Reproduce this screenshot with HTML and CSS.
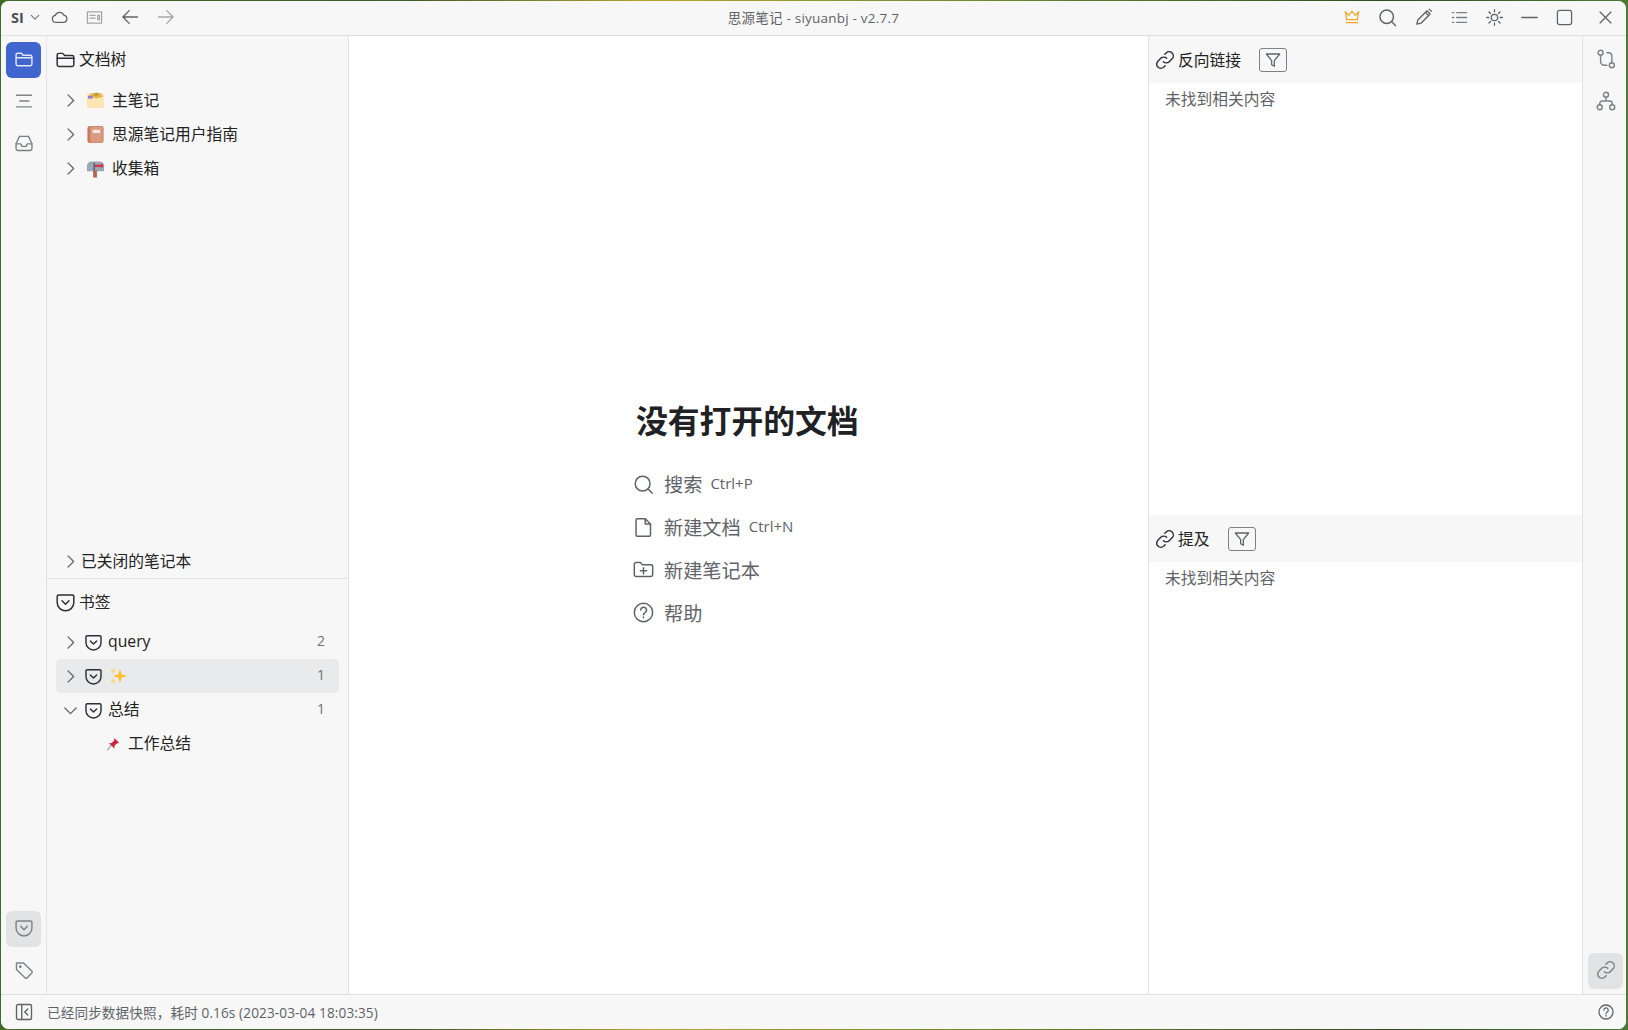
FILE: index.html
```html
<!DOCTYPE html>
<html lang="zh">
<head>
<meta charset="utf-8">
<title>思源笔记 - siyuanbj - v2.7.7</title>
<link rel="stylesheet" href="styles.css">
</head>
<body>
<svg class="sprite" aria-hidden="true">
  <symbol id="i-folder" viewBox="0 0 24 24"><path d="M2.5 7a2 2 0 0 1 2-2h4.300l2.200 2.500h8.500a2 2 0 0 1 2 2V18a2 2 0 0 1-2 2h-15a2 2 0 0 1-2-2z"/><path d="M2.500 10.500h19"/></symbol>
  <symbol id="i-pocket" viewBox="0 0 24 24"><path d="M4 3.500h16A1.500 1.500 0 0 1 21.500 5v7a9.500 9.500 0 0 1-19 0V5A1.500 1.500 0 0 1 4 3.500z"/><path d="M8 10l4 4 4-4"/></symbol>
  <symbol id="i-outline" viewBox="0 0 24 24"><path d="M3 5h18M7 12h11M3 19h18"/></symbol>
  <symbol id="i-inbox" viewBox="0 0 24 24"><path d="M2.500 13l3.500-8a2 2 0 0 1 1.800-1h8.400a2 2 0 0 1 1.800 1l3.500 8v6a2 2 0 0 1-2 2h-15a2 2 0 0 1-2-2z"/><path d="M2.500 13h5.500l1.500 3h5l1.500-3h5.500"/></symbol>
  <symbol id="i-tag" viewBox="0 0 24 24"><path d="M3 3.500h8.500L21.500 13.500a1.500 1.500 0 0 1 0 2l-6 6a1.500 1.500 0 0 1-2 0L3 11.500z" stroke-linejoin="round"/><circle cx="7.500" cy="8" r=".8"/></symbol>
  <symbol id="i-chev-r" viewBox="0 0 24 24"><path d="M8 3l9 9-9 9"/></symbol>
  <symbol id="i-chev-d" viewBox="0 0 24 24"><path d="M3 8l9 9 9-9"/></symbol>
  <symbol id="i-cloud" viewBox="0 0 24 24"><path d="M7 19a5 5 0 0 1-1-9.900A6.500 6.500 0 0 1 18 8.500 5.300 5.300 0 0 1 17.500 19z"/></symbol>
  <symbol id="i-doc" viewBox="0 0 24 24"><path d="M2 4h20v16H2z" stroke-opacity=".55"/><path d="M5.500 9h7.500M5.500 13h7.500M16.500 9h2.500v6h-2.500z" stroke-opacity=".55"/></symbol>
  <symbol id="i-back" viewBox="0 0 24 24"><path d="M22 12H3M11 3.500L2.500 12l8.500 8.500"/></symbol>
  <symbol id="i-fwd" viewBox="0 0 24 24"><path d="M2 12h19M13 3.500l8.500 8.500-8.500 8.500"/></symbol>
  <symbol id="i-crown" viewBox="0 0 24 24"><path d="M2 4l5 5.500L12 3.500l5 6L22 4l-2 12H4z"/><path d="M3.500 20.500h17"/></symbol>
  <symbol id="i-search" viewBox="0 0 24 24"><circle cx="11" cy="11" r="8.500"/><path d="M17.500 17.500L22 22"/></symbol>
  <symbol id="i-pen" viewBox="0 0 24 24"><path d="M2.500 21.500l1.300-5.500L16 3.800l4.200 4.200L8 20.200z"/><path d="M14 6l4 4M19 1.500l3 3"/></symbol>
  <symbol id="i-list" viewBox="0 0 24 24"><path d="M8 5h14M8 12h14M8 19h14M2 5h2M2 12h2M2 19h2"/></symbol>
  <symbol id="i-sun" viewBox="0 0 24 24"><circle cx="12" cy="12" r="4.500"/><path d="M12 1v3M12 20v3M1 12h3M20 12h3M4.200 4.200l2.100 2.100M17.700 17.700l2.100 2.100M4.200 19.800l2.100-2.100M17.700 6.300l2.100-2.100"/></symbol>
  <symbol id="i-min" viewBox="0 0 24 24"><path d="M1 12h22"/></symbol>
  <symbol id="i-max" viewBox="0 0 24 24"><rect x="2" y="2" width="20" height="20" rx="3"/></symbol>
  <symbol id="i-close" viewBox="0 0 24 24"><path d="M2 2l20 20M22 2L2 22"/></symbol>
  <symbol id="i-git" viewBox="0 0 24 24"><circle cx="5.500" cy="4.500" r="3"/><circle cx="19" cy="19.500" r="3"/><path d="M5.500 7.500V15a4.500 4.500 0 0 0 4.500 4.500h3M13 4.500h2a4 4 0 0 1 4 4v8"/></symbol>
  <symbol id="i-graph" viewBox="0 0 24 24"><circle cx="12" cy="4.500" r="3"/><circle cx="4.500" cy="19.500" r="3"/><circle cx="19.500" cy="19.500" r="3"/><path d="M12 7.500V12M4.500 16.500V15a3 3 0 0 1 3-3h9a3 3 0 0 1 3 3v1.500"/></symbol>
  <symbol id="i-link" viewBox="0 0 24 24"><path d="M10 14a5 5 0 0 0 7.100 0l3.400-3.400a5 5 0 0 0-7.100-7.100l-1.600 1.600"/><path d="M14 10a5 5 0 0 0-7.100 0l-3.400 3.400a5 5 0 0 0 7.100 7.100l1.600-1.600"/></symbol>
  <symbol id="i-filter" viewBox="0 0 24 24"><path d="M2 3h20l-8 10v8.500l-4-2.500v-6z"/></symbol>
  <symbol id="i-file" viewBox="0 0 24 24"><path d="M5 2h9l6 6v12.500a1.500 1.500 0 0 1-1.500 1.500h-13.500a1.500 1.500 0 0 1-1.500-1.500V3.500A1.500 1.500 0 0 1 5 2z"/><path d="M14 2v6h6"/></symbol>
  <symbol id="i-folder-plus" viewBox="0 0 24 24"><path d="M1.500 6a2 2 0 0 1 2-2h5l2.300 2.500h9.700a2 2 0 0 1 2 2V18a2 2 0 0 1-2 2h-17a2 2 0 0 1-2-2z"/><path d="M12 10v7M8.500 13.500h7"/></symbol>
  <symbol id="i-help" viewBox="0 0 24 24"><circle cx="12" cy="12" r="10.500"/><path d="M8.800 9.200a3.300 3.300 0 1 1 4.900 2.900c-1.100.6-1.700 1.200-1.700 2.400M12 17v1"/></symbol>
  <symbol id="i-dock" viewBox="0 0 24 24"><rect x="2" y="2" width="20" height="20" rx="2"/><path d="M9 2v20M17 8l-4 4 4 4"/></symbol>
</svg>

<div class="window">
  <header class="toolbar">
    <div class="tb-left">
      <span class="user">SI</span>
      <svg class="ic ic-10 tb-chev"><use href="#i-chev-d"/></svg>
      <svg class="ic ic-17 tb-cloud"><use href="#i-cloud"/></svg>
      <svg class="ic ic-15 tb-doc"><use href="#i-doc"/></svg>
      <svg class="ic ic-18 tb-back"><use href="#i-back"/></svg>
      <svg class="ic ic-18 tb-fwd"><use href="#i-fwd"/></svg>
    </div>
    <div class="tb-title">思源笔记 - siyuanbj - v2.7.7</div>
    <div class="tb-right">
      <svg class="ic ic-16 crown"><use href="#i-crown"/></svg>
      <svg class="ic ic-19"><use href="#i-search"/></svg>
      <svg class="ic ic-18"><use href="#i-pen"/></svg>
      <svg class="ic ic-17 soft"><use href="#i-list"/></svg>
      <svg class="ic ic-17"><use href="#i-sun"/></svg>
      <svg class="ic ic-17"><use href="#i-min"/></svg>
      <svg class="ic ic-17"><use href="#i-max"/></svg>
      <svg class="ic ic-12 close"><use href="#i-close"/></svg>
    </div>
  </header>

  <div class="body">
    <nav class="dock dock-left">
      <div class="dock-group">
        <span class="dock-btn is-primary"><svg class="ic ic-20"><use href="#i-folder"/></svg></span>
        <span class="dock-btn"><svg class="ic ic-20 soft"><use href="#i-outline"/></svg></span>
        <span class="dock-btn"><svg class="ic ic-20 soft"><use href="#i-inbox"/></svg></span>
      </div>
      <div class="dock-group">
        <span class="dock-btn is-on"><svg class="ic ic-20 soft"><use href="#i-pocket"/></svg></span>
        <span class="dock-btn"><svg class="ic ic-20 soft"><use href="#i-tag"/></svg></span>
      </div>
    </nav>

    <aside class="side">
      <section class="tree">
        <div class="side-head"><svg class="ic ic-21 dark"><use href="#i-folder"/></svg><span class="lift">文档树</span></div>
        <ul class="rows">
          <li class="row">
            <svg class="ic chev"><use href="#i-chev-r"/></svg>
            <svg class="emoji" viewBox="0 0 20 20"><rect x="1" y="2" width="18" height="16" rx="2" fill="#fde5b4"/><path d="M3 5l4-3h8l3 4-7 2z" fill="#e9b44a"/><rect x="2" y="5" width="5" height="3" fill="#9c7bd0"/><circle cx="11" cy="3.500" r="2" fill="#8bb34a"/><path d="M7 5l5-2 1 2z" fill="#e68a3a"/></svg>
            <span class="row-text lift">主笔记</span>
          </li>
          <li class="row">
            <svg class="ic chev"><use href="#i-chev-r"/></svg>
            <svg class="emoji" viewBox="0 0 20 20"><rect x="1.500" y="1" width="17" height="18" rx="2.500" fill="#c97a5e"/><rect x="4.500" y="1.500" width="13" height="17" rx="1.500" fill="#d99a80"/><rect x="7" y="5" width="8" height="3.500" fill="#f1e8e4"/></svg>
            <span class="row-text lift">思源笔记用户指南</span>
          </li>
          <li class="row">
            <svg class="ic chev"><use href="#i-chev-r"/></svg>
            <svg class="emoji" viewBox="0 0 20 20"><path d="M1 7a4.500 4.500 0 0 1 4.500-4.500h9A4.500 4.500 0 0 1 19 7v6H1z" fill="#9aa9b5"/><rect x="7.500" y="12" width="4" height="7.500" fill="#b0664a"/><rect x="8" y="4" width="1.200" height="8" fill="#3b4650"/><rect x="9" y="6" width="8" height="2.500" fill="#d8344a"/><rect x="16" y="5" width="2" height="4" fill="#d8344a"/></svg>
            <span class="row-text lift">收集箱</span>
          </li>
        </ul>
        <div class="row closed">
          <svg class="ic chev"><use href="#i-chev-r"/></svg>
          <span class="closed-text lift">已关闭的笔记本</span>
        </div>
      </section>

      <section class="marks">
        <div class="side-head"><svg class="ic ic-21 dark"><use href="#i-pocket"/></svg><span class="lift">书签</span></div>
        <ul class="rows">
          <li class="row">
            <svg class="ic chev"><use href="#i-chev-r"/></svg>
            <svg class="ic ic-19 dark mark-ic"><use href="#i-pocket"/></svg>
            <span class="mark-text lift">query</span>
            <span class="count">2</span>
          </li>
          <li class="row is-hover">
            <svg class="ic chev"><use href="#i-chev-r"/></svg>
            <svg class="ic ic-19 dark mark-ic"><use href="#i-pocket"/></svg>
            <svg class="sparkle" viewBox="0 0 18 18"><path d="M11 2l1.700 5.300L18 9l-5.300 1.700L11 16l-1.700-5.300L4 9l5.300-1.700z" fill="#fbc02d"/><path d="M4 1l.9 2.100L7 4l-2.100.9L4 7l-.9-2.100L1 4l2.100-.9z" fill="#fdd873"/><path d="M4 11l.9 2.100L7 14l-2.100.9L4 17l-.9-2.100L1 14l2.100-.9z" fill="#fdd873"/></svg>
            <span class="count">1</span>
          </li>
          <li class="row">
            <svg class="ic chev"><use href="#i-chev-d"/></svg>
            <svg class="ic ic-19 dark mark-ic"><use href="#i-pocket"/></svg>
            <span class="mark-text lift">总结</span>
            <span class="count">1</span>
          </li>
          <li class="row row-child">
            <svg class="pin" viewBox="0 0 16 16"><path d="M1.500 15l5-6" stroke="#9aa5ad" stroke-width="1.400"/><path d="M9.500 1l5.500 5.500-2.500.8-2.800 2.800-.2 3-6-6 3-.2 2.800-2.800z" fill="#d0243c"/></svg>
            <span class="child-text lift">工作总结</span>
          </li>
        </ul>
      </section>
    </aside>

    <main class="main">
      <div class="empty">
        <h1 class="empty-title">没有打开的文档</h1>
        <div class="empty-row"><svg class="ic ic-21"><use href="#i-search"/></svg><span class="empty-label">搜索</span><span class="hint">Ctrl+P</span></div>
        <div class="empty-row"><svg class="ic ic-21"><use href="#i-file"/></svg><span class="empty-label">新建文档</span><span class="hint">Ctrl+N</span></div>
        <div class="empty-row"><svg class="ic ic-21"><use href="#i-folder-plus"/></svg><span class="empty-label">新建笔记本</span></div>
        <div class="empty-row"><svg class="ic ic-21"><use href="#i-help"/></svg><span class="empty-label">帮助</span></div>
      </div>
    </main>

    <aside class="refs">
      <section class="ref">
        <div class="ref-head">
          <svg class="ic ic-20 dark"><use href="#i-link"/></svg>
          <span class="ref-title">反向链接</span>
          <span class="filter"><svg class="ic ic-16"><use href="#i-filter"/></svg></span>
        </div>
        <p class="ref-empty">未找到相关内容</p>
      </section>
      <section class="ref">
        <div class="ref-head">
          <svg class="ic ic-20 dark"><use href="#i-link"/></svg>
          <span class="ref-title">提及</span>
          <span class="filter"><svg class="ic ic-16"><use href="#i-filter"/></svg></span>
        </div>
        <p class="ref-empty">未找到相关内容</p>
      </section>
    </aside>

    <nav class="dock dock-right">
      <div class="dock-group">
        <span class="dock-btn"><svg class="ic ic-20 soft"><use href="#i-git"/></svg></span>
        <span class="dock-btn"><svg class="ic ic-20 soft"><use href="#i-graph"/></svg></span>
      </div>
      <div class="dock-group">
        <span class="dock-btn is-on"><svg class="ic ic-20 soft"><use href="#i-link"/></svg></span>
      </div>
    </nav>
  </div>

  <footer class="status">
    <svg class="ic ic-18 status-dock"><use href="#i-dock"/></svg>
    <span class="status-msg">已经同步数据快照，耗时 0.16s (2023-03-04 18:03:35)</span>
    <svg class="ic ic-16 status-help"><use href="#i-help"/></svg>
  </footer>
</div>
</body>
</html>
```

FILE: styles.css
```css
* { box-sizing: border-box; }
html, body { height: 100%; margin: 0; }
body {
  overflow: hidden;
  padding: 1px 2px 1px 1px;
  background:
    linear-gradient(90deg, #3e6a2a 0%, #3f5a28 25%, #b5a52e 40%, #6d8a30 60%, #2f4d22 85%, #4a7a35 100%);
  font-family: "Segoe UI", "Open Sans", "Noto Sans CJK SC", sans-serif;
  font-size: 15.75px;
  color: #222;
}
.sprite { display: none; }

.window {
  display: flex;
  flex-direction: column;
  height: 1028px;
  background: #fff;
  border-radius: 8px;
  overflow: hidden;
}

.ic {
  fill: none;
  stroke: #5f6368;
  stroke-width: 1.7;
  stroke-linecap: round;
  stroke-linejoin: round;
  flex: none;
}
.ic-10 { width: 10px; height: 10px; stroke-width: 2.5; }
.ic-12 { width: 13px; height: 13px; stroke-width: 2.4; }
.ic-15 { width: 17px; height: 17px; stroke-width: 1.8; }
.ic-16 { width: 16px; height: 16px; stroke-width: 1.9; }
.ic-17 { width: 17px; height: 17px; stroke-width: 1.8; }
.ic-18 { width: 18px; height: 18px; stroke-width: 1.8; }
.ic-19 { width: 19px; height: 19px; stroke-width: 1.8; }
.ic-20 { width: 20px; height: 20px; stroke-width: 1.7; }
.ic-21 { width: 21px; height: 21px; stroke-width: 1.7; }
.dark { stroke: #2d2f33; }
.soft { stroke: #7d8186; }
.lift { padding-bottom: 2px; }
.marks .rows .lift { padding-bottom: 3px; }

/* toolbar */
.toolbar {
  flex: none;
  position: relative;
  display: flex;
  align-items: center;
  justify-content: space-between;
  height: 35px;
  padding: 0 14px 2px 10px;
  background: #f7f7f7;
  border-bottom: 1px solid #dfe0e1;
}
.tb-left, .tb-right { display: flex; align-items: center; }
.user { font-weight: 700; font-size: 14.5px; color: #4b5058; width: 15px; }
.tb-chev { margin-left: 4px; stroke: #6f7378; stroke-width: 2.5; }
.tb-cloud { margin-left: 11px; }
.tb-doc { margin-left: 18px; }
.tb-back { margin-left: 18px; }
.tb-fwd { margin-left: 18px; stroke: #a3a6aa; }
.tb-title {
  position: absolute;
  left: 0;
  right: 0;
  text-align: center;
  font-size: 13.5px;
  letter-spacing: .22px;
  color: #5f6368;
  pointer-events: none;
}
.tb-right { gap: 18px; }
.crown { stroke: #f0a72f; }
.close { margin-left: 8px; }

/* body */
.body { flex: 1; display: flex; min-height: 0; }

.dock {
  flex: none;
  display: flex;
  flex-direction: column;
  justify-content: space-between;
  background: #f7f7f7;
  padding: 6px 5px 5px;
}
.dock-left { width: 46px; border-right: 1px solid #e2e3e4; }
.dock-right { width: 44px; border-left: 1px solid #e2e3e4; padding: 6px 3px 5px 5px; }
.dock-group { display: flex; flex-direction: column; gap: 6px; }
.dock-btn {
  display: flex;
  align-items: center;
  justify-content: center;
  width: 35px;
  height: 36px;
  padding-bottom: 3px;
  border-radius: 6px;
}
.is-primary { background: #4165ce; }
.is-primary .ic { stroke: #fff; opacity: .85; }
.is-on { background: #e1e3e5; }

/* left panel */
.side {
  flex: none;
  width: 302px;
  display: flex;
  flex-direction: column;
  background: #f7f7f7;
  border-right: 1px solid #e2e3e4;
}
.tree { flex: 1; display: flex; flex-direction: column; border-bottom: 1px solid #e2e3e4; }
.marks { flex: none; height: 415px; }
.tree .rows { flex: 1; }
.side-head {
  display: flex;
  align-items: center;
  gap: 3px;
  height: 47px;
  padding: 0 8px;
}
.marks .side-head { height: 46px; }
.rows { list-style: none; margin: 0; padding: 0; }
.row {
  display: flex;
  align-items: center;
  height: 34px;
  margin: 0 9px;
  padding-left: 7px;
  border-radius: 5px;
}
.is-hover { background: #e9eaeb; }
.chev { width: 15px; height: 15px; stroke: #65696e; stroke-width: 2.2; }
.emoji { width: 19px; height: 19px; margin-left: 8px; flex: none; }
.row-text { margin-left: 7px; }
.closed { flex: none; }
.closed-text { margin-left: 3px; }
.mark-ic { margin-left: 6px; }
.mark-text { margin-left: 5px; }
.sparkle { width: 18px; height: 18px; margin-left: 6px; }
.count { margin-left: auto; padding: 0 14px 3px 0; font-size: 14px; color: #6f7378; }
.row-child { padding-left: 50px; }
.pin { width: 14px; height: 14px; flex: none; }
.child-text { margin-left: 8px; }

/* main */
.main {
  flex: 1;
  min-width: 0;
  display: flex;
  align-items: center;
  justify-content: center;
  background: #fff;
}
.empty { width: 221px; }
.empty-title {
  margin: 3px 0 20px -2px;
  font-size: 31.8px;
  line-height: 44px;
  font-weight: 700;
  white-space: nowrap;
  color: #202124;
}
.empty-row {
  display: flex;
  align-items: center;
  height: 42.7px;
  margin-left: -5px;
  white-space: nowrap;
  color: #5f6368;
}
.empty-label { margin-left: 10px; font-size: 19.2px; }
.hint { margin-left: 8px; font-size: 15px; margin-bottom: 3px; }

/* right panel */
.refs {
  flex: none;
  width: 434px;
  display: flex;
  flex-direction: column;
  border-left: 1px solid #e2e3e4;
  background: #fff;
}
.ref { flex: 1; min-height: 0; }
.ref-head {
  display: flex;
  align-items: center;
  height: 47px;
  padding: 0 6px;
  background: #f7f7f7;
}
.ref-title { margin-left: 3px; }
.filter {
  display: flex;
  align-items: center;
  justify-content: center;
  width: 28px;
  height: 24px;
  margin-left: 18px;
  border: 1px solid #7d8186;
  border-radius: 3px;
}
.ref-empty { margin: 4px 16px; line-height: 24px; color: #5f6368; }

/* status bar */
.status {
  flex: none;
  display: flex;
  align-items: center;
  height: 35px;
  padding: 0 12px 0 14px;
  background: #f7f7f7;
  border-top: 1px solid #dfe0e1;
  font-size: 13.6px;
  color: #5f6368;
}
.status-msg { margin-left: 14px; letter-spacing: .12px; padding-bottom: 1px; }
.status-help { margin-left: auto; }
```
